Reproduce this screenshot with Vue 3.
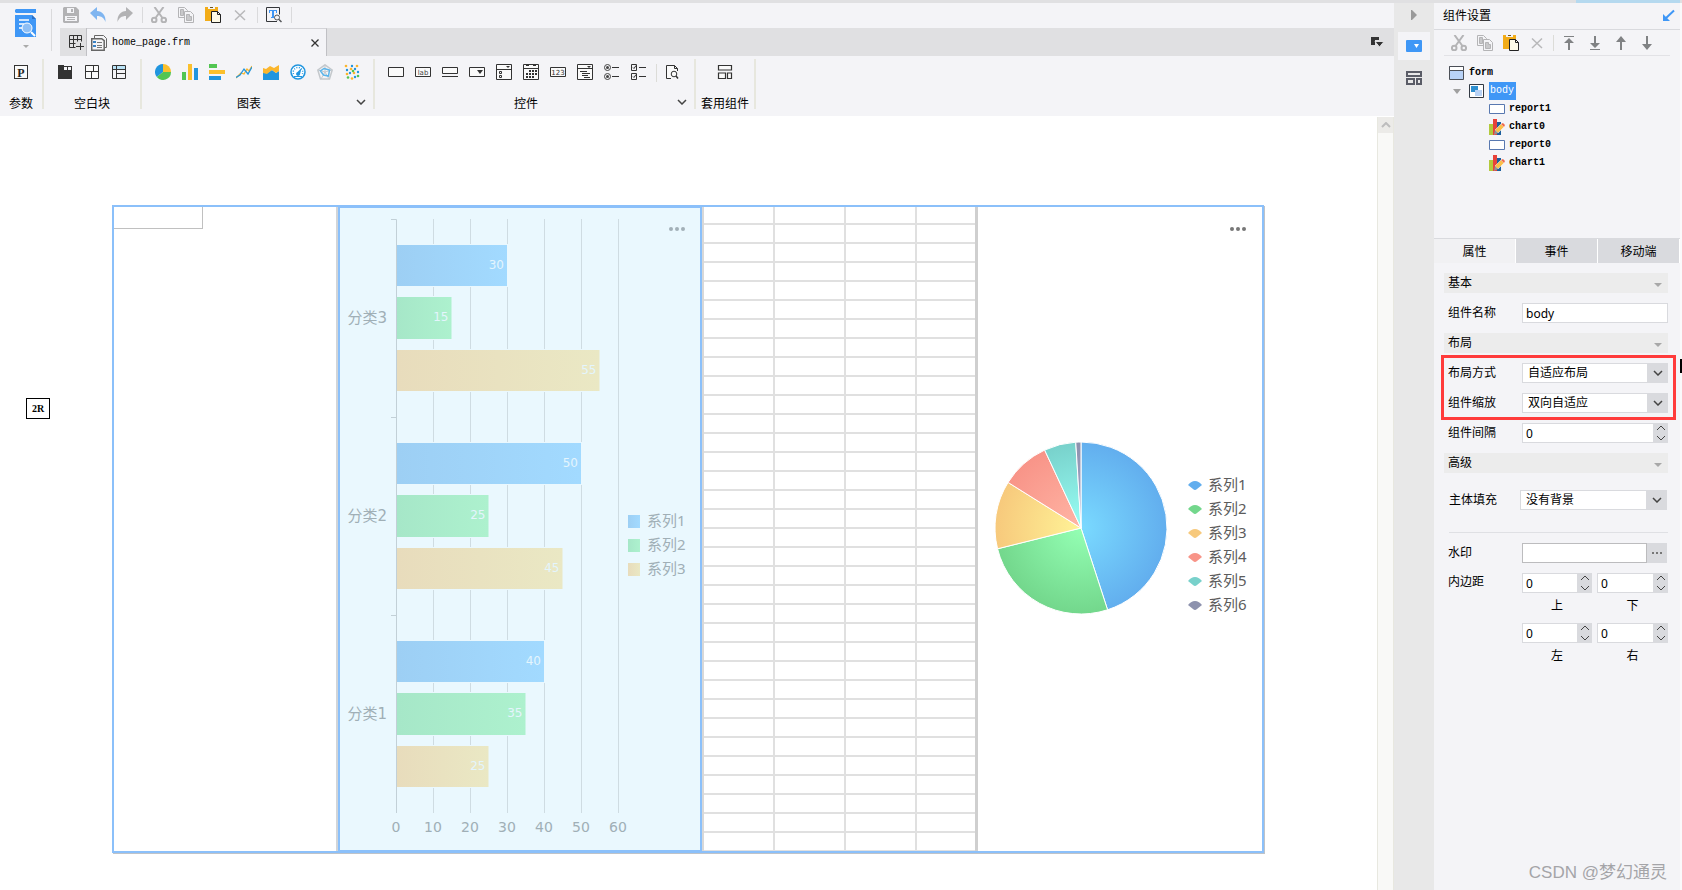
<script setup>
import { ref } from 'vue'

const icons = {
  save: '<path fill="#b2b2b4" d="M1 0h12l3 3v12l-1 1H1l-1-1V1z"/><path fill="#f4f4f7" d="M4 1h7v5H4zM2 9h12v5H2z"/><path fill="#b2b2b4" d="M8 2h2v3H8zM4 10h8v1H4zM4 12h8v1H4z"/>',
  undo: '<path fill="#7fb5f0" d="M0 6 7 0v4c5 0 9 4 8.500 11-1.500-4-4-6-8.500-6v4z"/>',
  redo: '<path fill="#b2b2b4" d="M16 6 9 0v4C4 4 0 8 .5 15 2 11 4.500 9 9 9v4z"/>',
  cut: '<g fill="none" stroke="#b4b4b6" stroke-width="2"><path d="M3.500 0 11.500 11M12.500 0 4.500 11"/><circle cx="3.200" cy="13" r="2.300"/><circle cx="12.800" cy="13" r="2.300"/></g>',
  copy: '<g fill="#f4f4f7" stroke="#b4b4b6"><path d="M.5.5h6l3 3v7h-9z"/><path fill="#c8c8ca" d="M2.500 2.500h3v6h-3z"/><path d="M6.500 4.500h6l3 3v8h-9z"/><path fill="#c8c8ca" d="M8.500 7.500h3v2h2v4h-5z" /></g>',
  paste: '<path fill="#f2ac18" d="M0 0h13v14H0z"/><path fill="#f4f4f7" d="M3 0h7v2H3z"/><path fill="#6b5420" d="M5 0h3v1H5z"/><path fill="#fffbe8" stroke="#222" d="M6.500 4.500h6l3 3v8h-9z"/><path fill="none" stroke="#222" d="M12.500 4.500v3h3"/>',
  remove: '<path fill="none" stroke="#b8b8ba" stroke-width="1.500" d="M3 3.500 13 13M13 3.500 3 13"/>',
  preview: '<path fill="none" stroke="#34363a" d="M11 14.500H.5V.5h13v7"/><path fill="#3f95f5" d="M3 3h8v3h-1V4H8v6h1v1H5v-1h1V4H4v2H3z"/><circle cx="11" cy="10.500" r="2.500" fill="#f4f4f7" stroke="#55575a"/><path stroke="#55575a" stroke-width="1.500" d="m13 12.500 2.500 2.500"/>',
  gridAdd: '<path fill="none" stroke="#333" stroke-width="1" d="M1.500 1.500h12v6M1.500 1.500v12h6M1.500 5.500h12M1.500 9.500h6M5.500 1.500v12M9.500 1.500v6M8 12.500h8M12.500 9v7"/>',
  formFile: '<path fill="#f4f4f7" stroke="#666" d="M3.500 3V.5h9l3 3v9h-2"/><path fill="#f4f4f7" stroke="#666" stroke-width="1.500" d="M.7 3.700h10l2.500 2v9.600H.7z"/><path fill="#3b82c4" d="M2 6h3v2H2zM2 10h3v2H2z"/><path stroke="#777" d="M6 7.500h5M6 10.500h5M6 12.500h5"/>',
  param: '<rect x="1.500" y="1.500" width="13" height="13" fill="#fafafa" stroke="#333"/><text x="8" y="12.500" text-anchor="middle" font-family="Liberation Serif, serif" font-size="12" font-weight="bold" fill="#222">P</text>',
  blockTab: '<path fill="#333" d="M1 1h6v1h8v13H1z"/><path fill="#f4f4f7" d="M7 3h3v3H7zM11 3h3v3h-3z"/>',
  blockAbs: '<path fill="#fafafa" stroke="#333" d="M1.500 1.500h13v13h-13zM1.500 7.500h13M9.500 1.500v6M7.500 7.500v7"/>',
  blockReport: '<path fill="#b9e2f6" d="M2 2h12v3H2z"/><path fill="none" stroke="#333" d="M1.500 1.500h13v13h-13zM1.500 5.500h13M5.500 1.500v13M5.500 9.500h9"/>',
  pie: '<path fill="#2095df" d="M8 8V0a8 8 0 0 0-6.200 13z"/><path fill="#fbc02d" d="M8 8V0a8 8 0 0 1 8 8z"/><path fill="#52c552" d="M8 8h8A8 8 0 0 1 1.800 13z"/>',
  column: '<path fill="#52c552" d="M0 8h4v8H0z"/><path fill="#fbc02d" d="M6 0h4v16H6z"/><path fill="#2095df" d="M12 4h4v12h-4z"/>',
  bar: '<path fill="#52c552" d="M0 0h8v4H0z"/><path fill="#fbc02d" d="M0 6h16v4H0z"/><path fill="#2095df" d="M0 12h12v4H0z"/>',
  line: '<g fill="none" stroke-width="1.300"><path stroke="#fbb62d" d="M0 14 5 9l3 1 3-5 2 2 3-5"/><path stroke="#2095df" d="M0 13.500 4 11l4-6 4 5 4-7"/></g>',
  area: '<path fill="#2095df" d="M0 8l4 1 5-3 4 3 3-2v9H0z"/><path fill="#fbb62d" d="M0 4l3 1 4-3 4 2 5-3v6l-3 2-4-3-5 4-4-1z"/>',
  gauge: '<circle cx="8" cy="8" r="7" fill="#fff" stroke="#2095df" stroke-width="1.500"/><path stroke="#2095df" stroke-dasharray="1 1.500" fill="none" stroke-width="1.500" d="M3.500 10a4.800 4.800 0 1 1 9 0"/><path fill="#2095df" d="M11.500 4 10 10.500a2 2 0 1 1-2.500-2.500zM4 12h8v1H4z"/>',
  radar: '<g fill="none"><path stroke="#c4c8cc" stroke-width="1.500" d="M8 .8 15.200 6l-2.700 9h-9L.8 6z"/><path stroke="#c4c8cc" d="M8 1v7L1 6M8 8l7-2M8 8l-4 7M8 8l4 7"/><path stroke="#5ab4ea" stroke-width="1.500" d="M7 4.500 12.500 6l-1 6-5-1L3.500 7z"/></g>',
  scatter: '<g fill="#fbb62d"><circle cx="2" cy="2" r="1.300"/><circle cx="13" cy="2" r="1.300"/><circle cx="7" cy="5" r="1.300"/><circle cx="3" cy="10" r="1.300"/><circle cx="10" cy="9" r="1.300"/><circle cx="8" cy="14.500" r="1.300"/></g><g fill="#2095df"><circle cx="8" cy="2" r="1.200"/><circle cx="11" cy="5" r="1.200"/><circle cx="3" cy="6" r="1.200"/><circle cx="14" cy="8" r="1.200"/><circle cx="6" cy="9" r="1.200"/><circle cx="11" cy="13" r="1.200"/></g><g fill="#52c552"><circle cx="9" cy="7" r="1.300"/><circle cx="4" cy="13.500" r="1.300"/><circle cx="14" cy="12" r="1.300"/></g>',
  box: '<path fill="#fafafa" stroke="#333" d="M.5 3.500h15v9H.5z"/>',
  lab: '<path fill="#fafafa" stroke="#333" d="M.5 3.500h15v9H.5z"/><text x="8" y="11" text-anchor="middle" font-family="DejaVu Sans, sans-serif" font-size="7" fill="#444">lab</text>',
  input: '<path fill="#fafafa" stroke="#333" d="M.5 3.500h15v6H.5zM0 12.500h16"/>',
  combo: '<path fill="#fafafa" stroke="#333" d="M.5 3.500h15v9H.5z"/><path fill="#333" d="M8 6h6l-3 4z"/>',
  comboList: '<path fill="#fafafa" stroke="#333" d="M.5.5h15v15H.5zM.5 5.500h15M3.500 7.500h2v2h-2zM3.500 11.500h2v2h-2z"/><path fill="#333" d="M10 2h4l-2 2z"/>',
  date: '<path fill="#fafafa" stroke="#333" d="M.5.500h15v15H.5zM.5 4.500h15"/><path stroke="#333" stroke-width="2" d="M3 1h3M10 1h3"/><path stroke="#333" stroke-width="2" stroke-dasharray="2 1" d="M6 7h8M3 10h11M3 13h8"/>',
  number: '<path fill="#fafafa" stroke="#333" d="M.5 3.500h15v9H.5z"/><text x="8" y="11" text-anchor="middle" font-family="DejaVu Sans, sans-serif" font-size="7" fill="#333">123</text>',
  tree: '<path fill="#fafafa" stroke="#333" d="M.5.5h15v15H.5zM.5 4.500h15M3 7.500h7M5 9.500h8M5 11.500h6M7 13.500h6"/><path fill="#333" d="M10 2h4l-2 2z"/>',
  radios: '<g fill="none" stroke="#444"><circle cx="3.500" cy="3.500" r="3"/><circle cx="3.500" cy="12.500" r="3"/></g><circle cx="3.500" cy="3.500" r="1.500" fill="#444"/><circle cx="3.500" cy="12.500" r="1.500" fill="#444"/><path stroke="#333" d="M8 3.500h7M8 12.500h7"/>',
  checks: '<path fill="none" stroke="#333" d="M.5.5h5v6h-5zM.5 9.500h5v6h-5zM2 3.500l1 1 2-3M2 12.500l1 1 2-3M8 3.500h7M8 12.500h7"/>',
  search: '<path fill="#fafafa" stroke="#333" d="M6 14.500H1.500v-13h8l3 3V7M9.500 1.500v3h3"/><circle cx="9" cy="10" r="2.800" fill="#fafafa" stroke="#333"/><path stroke="#333" stroke-width="1.500" d="m11 12 2 2.500"/>',
  kit: '<path fill="#fafafa" stroke="#333" stroke-width="1.200" d="M1.500 1.500h13v4.500h-13zM1.500 9h7v5.500h-7zM10.500 9h4v5.500h-4z"/>',
  toTop: '<path fill="#808284" d="M3 1h10v1H3zM8 3l5 5H9v7H7V8H3z"/>',
  toBottom: '<path fill="#808284" d="M3 14h10v1H3zM8 13 3 8h4V1h2v7h4z"/>',
  up: '<path fill="#808284" d="m8 1 5 6H9v8H7V7H3z"/>',
  down: '<path fill="#808284" d="M8 15 3 9h4V1h2v8h4z"/>',
  form: '<path fill="#b8d2f6" stroke="#4b4f57" d="M.5 1.500h14v13H.5z"/><path fill="#fff" stroke="#4b4f57" d="M.5 1.500h14v4H.5z"/>',
  body: '<path fill="#fff" stroke="#333a44" d="M.5 1.500h14v13H.5z"/><path fill="#2f8fd0" d="M2 3h7v6H2z"/><path fill="#b8d2f6" d="M6 7h7v6H6z"/>',
  report: '<path fill="#fff" stroke="#5878b0" d="M.5 3.500h15v9H.5z"/>',
  chart: '<path fill="#b3c93c" d="M0 5h4v11H0z"/><path fill="#e8423a" d="M4 0h4v16H4z"/><path fill="#1c5f9e" d="M8 3h4v13H8z"/><path fill="#fbc04a" stroke="#fff" stroke-width=".5" d="M6 11 12 5l3 3-6 6z"/><path fill="#ef6a4d" d="m12 5 2-1 2 2-1 2z"/><path fill="#8e9498" d="m6 11 3 3-4 2z"/>',
  component: '<rect y="2" width="16" height="12" rx="1" fill="#3f97f6"/><path fill="#fff" d="M8 6h5l-2.500 4z"/>',
  library: '<path fill="none" stroke="#5a5c66" stroke-width="2" d="M1 2h14v4H1zM1 9h7v5H1zM11 9h4v5h-4z"/>',
  pop: '<path fill="#333" d="M2 3h8v3H6v5H2z"/><path fill="#333" stroke="#e0e0e2" d="M6 7.500h9L10.500 13z"/>',
  close: '<path fill="none" stroke="#333" stroke-width="1.300" d="M4.500 4.500l7 7M11.500 4.500l-7 7"/>',
  pin: '<path fill="none" stroke="#3f97f6" stroke-width="2" d="M14 2.500 5 11"/><path fill="#3f97f6" d="M3 6v7h7z"/>'
}

const quick = [
  [['save', '保存'], ['undo', '撤销'], ['redo', '恢复']],
  [['cut', '剪切'], ['copy', '复制'], ['paste', '粘贴'], ['remove', '删除']],
  [['preview', '预览']]
]
const groups = [
  { label: '参数', cls: 'g-param', icons: ['param'] },
  { label: '空白块', cls: 'g-block', icons: ['blockTab', 'blockAbs', 'blockReport'] },
  { label: '图表', cls: 'g-chart', more: true, icons: ['pie', 'column', 'bar', 'line', 'area', 'gauge', 'radar', 'scatter'] },
  { label: '控件', cls: 'g-widget', more: true, icons: ['box', 'lab', 'input', 'combo', 'comboList', 'date', 'number', 'tree', 'radios', 'checks', '|', 'search'] },
  { label: '套用组件', cls: 'g-kit', icons: ['kit'] }
]
const treeTools = ['cut', 'copy', 'paste', 'remove', '|', 'toTop', 'toBottom', 'up', 'down']
const leaves = [['report', 'report1'], ['chart', 'chart0'], ['report', 'report0'], ['chart', 'chart1']]

const categories = [
  { name: '分类3', values: [30, 15, 55] },
  { name: '分类2', values: [50, 25, 45] },
  { name: '分类1', values: [40, 35, 25] }
]
const barTop = [26, 78, 131]
const barHeight = [41, 42, 41]
const barColors = [['#9dcff4', '#a2daff'], ['#a6e7c8', '#adf1ce'], ['#e8dcbc', '#eae8c4']]

const slices = [
  { name: '系列1', from: 0, to: 162, a: '#7adaff', b: '#62aeee' },
  { name: '系列2', from: 162, to: 256, a: '#94ffb4', b: '#73d78c' },
  { name: '系列3', from: 256, to: 302, a: '#fff397', b: '#f7c97c' },
  { name: '系列4', from: 302, to: 335, a: '#ffb5a5', b: '#f89488' },
  { name: '系列5', from: 335, to: 356.5, a: '#98fff5', b: '#78d1cb' },
  { name: '系列6', from: 356.5, to: 360, a: '#a9a9cf', b: '#8d92ae' }
]
function slicePath({ from, to }) {
  const p = d => {
    const t = d * Math.PI / 180
    return `${(103 + 86 * Math.sin(t)).toFixed(2)} ${(321 - 86 * Math.cos(t)).toFixed(2)}`
  }
  return `M103 321L${p(from)}A86 86 0 0 1 ${p(to)}z`
}

const name = ref('body')
const gap = ref('0')
const watermark = ref('')
const pads = ref([['上', '0'], ['下', '0'], ['左', '0'], ['右', '0']])
</script>

<template>
  <div class="app">
    <div class="strip"><i></i></div>
    <main class="main">
      <header class="head">
        <button class="logo" aria-label="文件">
          <svg width="22" height="30" viewBox="0 0 22 30"><path fill="#3f97f6" d="M0 1l1-1h20v4H1L0 3zM0 6h17l4 4v18H0z"/><path fill="#2a70c8" d="M17 6v4h4z"/><path stroke="#fff" stroke-width="1.500" d="M4 11h10M4 15h5M4 19h5"/><circle cx="12" cy="19" r="5" fill="#8ebff5" stroke="#fff"/><path stroke="#fff" stroke-width="2" d="m16 23 4 4"/></svg>
          <svg width="6" height="4" viewBox="0 0 6 4"><path fill="#aaa" d="M0 0h6L3 3z"/></svg>
        </button>
        <div class="head-main">
          <div class="quick">
            <div v-for="(g, i) in quick" :key="i" class="quick-group">
              <button v-for="q in g" :key="q[0]" class="ib" :aria-label="q[1]"><svg class="ic" viewBox="0 0 16 16" v-html="icons[q[0]]"></svg></button>
            </div>
          </div>
          <div class="tabs">
            <button class="all" aria-label="新建"><svg class="ic" viewBox="0 0 16 16" v-html="icons.gridAdd"></svg></button>
            <div class="tab">
              <svg class="ic" viewBox="0 0 16 16" v-html="icons.formFile"></svg>
              <span>home_page.frm</span>
              <button class="ib" aria-label="关闭"><svg class="ic" viewBox="0 0 16 16" v-html="icons.close"></svg></button>
            </div>
            <button class="ib pop" aria-label="窗口列表"><svg class="ic" viewBox="0 0 16 16" v-html="icons.pop"></svg></button>
          </div>
        </div>
      </header>

      <div class="ribbon">
        <section v-for="g in groups" :key="g.label" class="group" :class="g.cls">
          <div class="group-icons">
            <template v-for="n in g.icons" :key="n">
              <span v-if="n === '|'" class="vsep"></span>
              <button v-else class="ib" :aria-label="n"><svg class="ic" viewBox="0 0 16 16" v-html="icons[n]"></svg></button>
            </template>
          </div>
          <div class="group-label">
            <span>{{ g.label }}</span>
            <button v-if="g.more" class="ib more" aria-label="更多"><svg width="10" height="6" viewBox="0 0 10 6"><path fill="none" stroke="#444" stroke-width="1.500" d="M1 1l4 4 4-4"/></svg></button>
          </div>
        </section>
      </div>

      <div class="work">
        <div class="canvas">
          <div class="gutter"><button class="badge">2R</button></div>
          <div class="frame">
            <div class="pane report"><div class="cell"></div></div>
            <div class="pane bars">
              <svg viewBox="0 0 360 642" role="img" aria-label="条形图">
                <defs>
                  <linearGradient v-for="(c, i) in barColors" :id="'bar' + i" :key="i"><stop offset="0" :stop-color="c[0]"/><stop offset="1" :stop-color="c[1]"/></linearGradient>
                </defs>
                <path v-for="k in 6" :key="k" :d="`M${56.5 + 37 * k} 11V605`" stroke="#cfdce2"/>
                <path d="M51 11.500h5.500V605M51 209.500h5M51 407.500h5" fill="none" stroke="#c2d0d7"/>
                <g v-for="(c, ci) in categories" :key="c.name">
                  <text class="cat" x="47" :y="115 + 198 * ci">{{ c.name }}</text>
                  <g v-for="(v, i) in c.values" :key="i">
                    <rect x="57" :y="10 + 198 * ci + barTop[i]" :width="3.7 * v" :height="barHeight[i] + 2" fill="#eaf8fe"/>
                    <rect x="57" :y="11 + 198 * ci + barTop[i]" :width="3.7 * v - 1" :height="barHeight[i]" :fill="`url(#bar${i})`"/>
                    <text class="val" :x="53 + 3.7 * v" :y="35 + 198 * ci + barTop[i]">{{ v }}</text>
                  </g>
                </g>
                <text v-for="k in 7" :key="k" class="axis" :x="19 + 37 * k" y="624">{{ (k - 1) * 10 }}</text>
                <g v-for="i in 3" :key="i">
                  <rect x="288" :y="283 + 24 * i" width="12" height="13" :fill="`url(#bar${i - 1})`"/>
                  <text class="leg" x="307" :y="294 + 24 * i">系列{{ i }}</text>
                </g>
              </svg>
              <button class="dots" aria-label="图表菜单"><i></i><i></i><i></i></button>
            </div>
            <div class="pane sheet">
              <table aria-label="report0"><tbody><tr v-for="r in 34" :key="r"><td v-for="c in 4" :key="c"></td></tr></tbody></table>
            </div>
            <div class="pane pie">
              <svg viewBox="0 0 284 644" role="img" aria-label="饼图">
                <defs>
                  <radialGradient v-for="(s, i) in slices" :id="'pie' + i" :key="i" gradientUnits="userSpaceOnUse" cx="103" cy="321" r="86"><stop offset="0" :stop-color="s.a"/><stop offset="1" :stop-color="s.b"/></radialGradient>
                </defs>
                <path v-for="(s, i) in slices" :key="i" :d="slicePath(s)" :fill="`url(#pie${i})`" stroke="#fff"/>
                <g v-for="(s, i) in slices" :key="s.name">
                  <path :fill="s.b" :transform="`translate(210 ${274 + 24 * i})`" d="M0 4C3 1 4 0 7 0s4 1 7 4L9 8Q7 10 5 8z"/>
                  <text class="leg" x="230" :y="283 + 24 * i">{{ s.name }}</text>
                </g>
              </svg>
              <button class="dots" aria-label="图表菜单"><i></i><i></i><i></i></button>
            </div>
          </div>
        </div>
        <div class="scroll"><button aria-label="向上滚动"><svg width="10" height="6" viewBox="0 0 10 6"><path fill="none" stroke="#bdbdbd" stroke-width="2" d="M1 5l4-4 4 4"/></svg></button></div>
      </div>
    </main>

    <nav class="rail">
      <button class="fold" aria-label="收起"><svg width="6" height="10" viewBox="0 0 6 10"><path fill="#999" d="M0 0h1l5 5-5 5H0z"/></svg></button>
      <button class="rail-tab on" aria-label="组件设置"><svg class="ic" viewBox="0 0 16 16" v-html="icons.component"></svg></button>
      <button class="rail-tab" aria-label="组件库"><svg class="ic" viewBox="0 0 16 16" v-html="icons.library"></svg></button>
    </nav>

    <aside class="panel">
      <header class="panel-head"><h2>组件设置</h2><button class="ib" aria-label="浮动"><svg class="ic" viewBox="0 0 16 16" v-html="icons.pin"></svg></button></header>
      <div class="tree-tools">
        <template v-for="n in treeTools" :key="n">
          <span v-if="n === '|'" class="vsep"></span>
          <button v-else class="ib" :aria-label="n"><svg class="ic" viewBox="0 0 16 16" v-html="icons[n]"></svg></button>
        </template>
      </div>
      <ul class="tree">
        <li class="lv0"><svg class="ic" viewBox="0 0 16 16" v-html="icons.form"></svg><span>form</span></li>
        <li class="lv1"><svg width="8" height="5" viewBox="0 0 8 5"><path fill="#a0a0a0" d="M0 0h8L4 5z"/></svg><svg class="ic" viewBox="0 0 16 16" v-html="icons.body"></svg><span class="sel">body</span></li>
        <li v-for="l in leaves" :key="l[1]" class="lv2"><svg class="ic" viewBox="0 0 16 16" v-html="icons[l[0]]"></svg><span>{{ l[1] }}</span></li>
      </ul>
      <div class="ptabs"><button class="on">属性</button><button>事件</button><button>移动端</button></div>
      <form class="props" @submit.prevent>
        <button type="button" class="sec">基本<i></i></button>
        <div class="row"><label for="f-name">组件名称</label><input id="f-name" v-model="name" type="text"></div>
        <button type="button" class="sec">布局<i></i></button>
        <div class="marked">
          <div class="row">
            <label for="f-layout">布局方式</label>
            <div class="select"><select id="f-layout"><option>自适应布局</option></select><svg width="10" height="6" viewBox="0 0 10 6"><path d="M1 1l4 4 4-4"/></svg></div>
          </div>
          <div class="row">
            <label for="f-scale">组件缩放</label>
            <div class="select"><select id="f-scale"><option>双向自适应</option></select><svg width="10" height="6" viewBox="0 0 10 6"><path d="M1 1l4 4 4-4"/></svg></div>
          </div>
        </div>
        <div class="row">
          <label for="f-gap">组件间隔</label>
          <div class="spin"><input id="f-gap" v-model="gap" type="text"><svg width="14" height="18" viewBox="0 0 14 18"><path d="M3 6l4-4 4 4M3 12l4 4 4-4"/></svg></div>
        </div>
        <button type="button" class="sec">高级<i></i></button>
        <div class="row fill">
          <label for="f-fill">主体填充</label>
          <div class="select"><select id="f-fill"><option>没有背景</option></select><svg width="10" height="6" viewBox="0 0 10 6"><path d="M1 1l4 4 4-4"/></svg></div>
        </div>
        <hr>
        <div class="row mark"><label for="f-mark">水印</label><input id="f-mark" v-model="watermark" type="text"><button type="button" aria-label="编辑水印"><i></i><i></i><i></i></button></div>
        <div class="row pads">
          <span>内边距</span>
          <div class="pad-grid">
            <div v-for="(p, i) in pads" :key="p[0]" class="pad">
              <div class="spin"><input :id="'f-pad' + i" v-model="p[1]" type="text"><svg width="14" height="18" viewBox="0 0 14 18"><path d="M3 6l4-4 4 4M3 12l4 4 4-4"/></svg></div>
              <label :for="'f-pad' + i">{{ p[0] }}</label>
            </div>
          </div>
        </div>
      </form>
      <span class="caret"></span>
      <div class="credit">CSDN @梦幻通灵</div>
    </aside>
  </div>
</template>

<style>
body { margin: 0; }
</style>

<style scoped>
* { box-sizing: border-box; }
.app {
  display: grid;
  grid-template-columns: minmax(0, 1fr) 40px 248px;
  grid-template-rows: 3px minmax(0, 1fr);
  min-height: 100vh;
  background: #f4f4f7;
  color: #000;
  font: 12px/18px "Liberation Sans", "Noto Sans CJK SC", sans-serif;
}
button { margin: 0; padding: 0; border: 0; background: none; color: inherit; font: inherit; }
svg { display: block; flex: none; }
.ic { width: 16px; height: 16px; }
.ib { display: flex; }
.strip { grid-column: 1 / -1; display: flex; justify-content: flex-end; padding-right: 2px; background: #e0e0e2; }
.strip i { width: 104px; background: #b5d9ef; }

.main { display: flex; flex-direction: column; min-width: 0; }
.head { display: flex; height: 53px; }
.logo { display: flex; flex-direction: column; align-items: center; gap: 6px; width: 52px; margin: 6px 8px 5px 0; border-right: 1px solid #dadadc; }
.head-main { flex: 1; min-width: 0; }
.quick { display: flex; height: 25px; padding: 4px 0 5px 3px; }
.quick-group { display: flex; gap: 11px; padding-right: 9px; margin-right: 8px; border-right: 1px solid #dadadc; }
.tabs { display: flex; align-items: center; height: 28px; background: #e0e0e2; }
.all { display: flex; align-items: center; justify-content: center; width: 27px; height: 28px; border-right: 1px solid #c0c0c4; padding-left: 5px; }
.tab { display: flex; align-items: center; gap: 5px; width: 240px; height: 28px; padding: 0 3px 0 4px; background: #f4f4f7; border-top: 1px solid #d4d4d8; border-right: 1px solid #c0c0c4; }
.tab span { flex: 1; font-family: "Liberation Mono", monospace; font-size: 10px; }
.pop { margin-left: auto; margin-right: 9px; }

.ribbon { display: flex; height: 60px; padding: 3px 0 7px; }
.group { display: flex; flex-direction: column; border-right: 2px solid #e7e7de; }
.group-icons { display: flex; gap: 11px; height: 36px; padding-top: 5px; justify-content: center; }
.group-label { position: relative; height: 14px; text-align: center; }
.more { position: absolute; right: 7px; top: 4px; }
.g-param { width: 44px; }
.g-block { width: 98px; }
.g-chart { width: 233px; }
.g-chart .group-icons, .g-widget .group-icons { justify-content: flex-start; padding-left: 13px; }
.g-chart .group-label, .g-widget .group-label { padding-right: 17px; }
.g-widget { width: 321px; }
.g-widget .group-icons { gap: 11px; }
.g-widget .vsep { margin: 0 -3px 0 -2px; }
.g-kit { width: 60px; }
.vsep { width: 1px; height: 18px; background: #dcdcd8; }

.work { flex: 1; display: flex; background: #fff; }
.canvas { flex: 1; min-width: 0; display: flex; padding: 89px 113px 36px 0; }
.gutter { width: 112px; padding: 193px 0 0 26px; }
.badge { display: block; width: 24px; height: 21px; border: 1px solid #000; font: bold 10px/18px "Liberation Serif", serif; }
.frame {
  flex: 1; min-width: 0; display: grid; align-items: stretch; align-self: flex-start;
  grid-template-columns: 224fr minmax(0, 364fr) minmax(0, 276fr) minmax(0, 284fr);
  border: 2px solid #8bc0fa; box-shadow: 1px 1px 0 #bfc3c8;
}
.pane { position: relative; min-width: 0; }
.pane > svg { width: 100%; height: 100%; }
.report { border-right: 2px solid #d2d5d8; }
.cell { width: 89px; height: 22px; border: solid #c0c0c0; border-width: 0 1px 1px 0; }
.bars { border: solid #8bc0fa; border-width: 1px 2px; background: #eaf8fe; }
.sheet { border-left: 2px solid #d8d8d8; border-right: 3px solid #cfcfcf; overflow: hidden; }
table { width: 100%; border-collapse: separate; border-spacing: 0; table-layout: fixed; }
td { height: 19px; padding: 0; border: solid #e0e0e0; border-width: 0 2px 2px 0; }
tr:first-child td, tr:last-child td { height: 18px; }
tr:last-child td { border-bottom-width: 1px; }
td:nth-child(-n+3) { width: 71px; }
td:last-child { border-right: 0; }
text { font-family: "DejaVu Sans", "Noto Sans CJK SC", sans-serif; font-size: 14px; fill: #a0afb6; }
.cat { text-anchor: end; font-size: 15px; }
.axis { text-anchor: middle; }
.val { text-anchor: end; font-size: 12px; fill: #e4f5fd; }
.leg { font-family: "Noto Sans", "Noto Sans CJK SC", sans-serif; font-size: 15px; }
.pie .leg { fill: #5c5c5c; }
.dots { position: absolute; top: 20px; right: 16px; display: flex; gap: 2px; }
.dots i { width: 4px; height: 4px; border-radius: 2px; background: #777; }
.bars .dots { top: 19px; right: 15px; }
.bars .dots i { background: #a2b0b8; }
.scroll { width: 17px; margin-top: 1px; border: solid #e8e8e0; border-width: 0 1px; background: #f9f9f7; }
.scroll button { display: flex; align-items: center; justify-content: center; width: 100%; height: 16px; background: #ecebe8; }

.rail { display: flex; flex-direction: column; align-items: center; background: #e8e8e8; }
.fold { padding: 7px 0 12px; }
.rail-tab { display: flex; align-items: center; justify-content: center; width: 32px; height: 28px; margin-bottom: 4px; }
.rail-tab.on { background: #f4f4f7; }

.panel { position: relative; border-right: 2px solid #fafafb; }
.panel-head { display: flex; align-items: center; justify-content: space-between; height: 27px; padding: 0 4px 0 9px; border-bottom: 1px solid #d9dade; }
h2 { margin: 0; font: inherit; }
.tree-tools { display: flex; gap: 10px; height: 26px; margin: 0 10px; padding: 5px 7px 0; border-bottom: 1px solid #e2e2e6; }
.tree-tools .vsep { height: 16px; margin: 0 -3px 0 -2px; }
.tree { list-style: none; margin: 0; padding: 8px 0 0 15px; height: 182px; font: bold 10px/18px "Liberation Mono", monospace; }
.tree li { display: flex; align-items: center; height: 18px; gap: 4px; }
.lv1 { padding-left: 4px; }
.lv1 .ic { margin-left: 4px; }
.lv2 { padding-left: 40px; }
.sel { padding: 0 2px 0 1px; background: #3f97f6; color: #fff; font-weight: normal; }
.ptabs { display: flex; gap: 1px; height: 25px; padding-right: 1px; border-top: 1px solid #d9dade; background: #fff; }
.ptabs button { flex: 1; padding-top: 1px; background: #d9dade; }
.ptabs .on { background: #f1f1f3; }
.props { display: flex; flex-direction: column; gap: 10px; padding: 10px 12px 0 10px; }
.sec { display: flex; align-items: center; justify-content: space-between; height: 20px; padding: 0 6px 0 4px; background: #ececec; }
.sec i { width: 8px; border: solid transparent; border-width: 4px 4px 0; border-top-color: #a8a8a8; margin-top: 4px; }
.row { display: grid; grid-template-columns: 74px minmax(0, 1fr); align-items: center; min-height: 20px; padding-left: 4px; }
input, select { width: 100%; min-width: 0; height: 20px; margin: 0; padding: 0 3px; border: 1px solid #d9dade; border-radius: 0; background: #fff; color: #000; font: 12px/18px "Noto Sans", "Noto Sans CJK SC", sans-serif; appearance: none; outline: 0; }
.marked { display: flex; flex-direction: column; gap: 10px; margin: -8px -8px -7px -3px; padding: 5px 5px 4px 0; border: 3px solid #ff3b3b; }
.select { display: grid; grid-template-columns: minmax(0, 1fr) 20px; align-items: center; background: #d9dade; }
.select select { padding: 0 5px; }
.select svg { margin-left: 5px; }
.select path, .spin path { fill: none; stroke: #444; stroke-width: 1.500; }
.spin path { stroke-width: 1; }
.spin { display: grid; grid-template-columns: minmax(0, 1fr) 14px; align-items: center; background: #d9dade; }
.fill { margin-top: 7px; grid-template-columns: 71px minmax(0, 1fr); padding: 0 1px 0 5px; }
hr { width: auto; height: 1px; margin: 12px 0 0 5px; border: 0; background: #dfe0e4; }
.mark { grid-template-columns: 74px minmax(0, 1fr) 20px; padding-right: 1px; }
.mark input { border-color: #bcbcbe; }
.mark button { display: flex; align-items: center; justify-content: center; gap: 2px; height: 20px; background: #d9dade; }
.mark button i { width: 2px; height: 2px; background: #777; }
.pads { align-items: start; }
.pad-grid { display: grid; grid-template-columns: 70px minmax(0, 1fr); gap: 6px 5px; }
.pad { display: grid; gap: 4px; }
.pad label { height: 20px; line-height: 18px; text-align: center; }
.caret { position: absolute; right: -2px; top: 356px; width: 2px; height: 14px; background: #000; }
.credit { position: absolute; right: 13px; bottom: 5px; color: #a4a4a8; font-size: 17px; line-height: 24px; white-space: nowrap; }
</style>
